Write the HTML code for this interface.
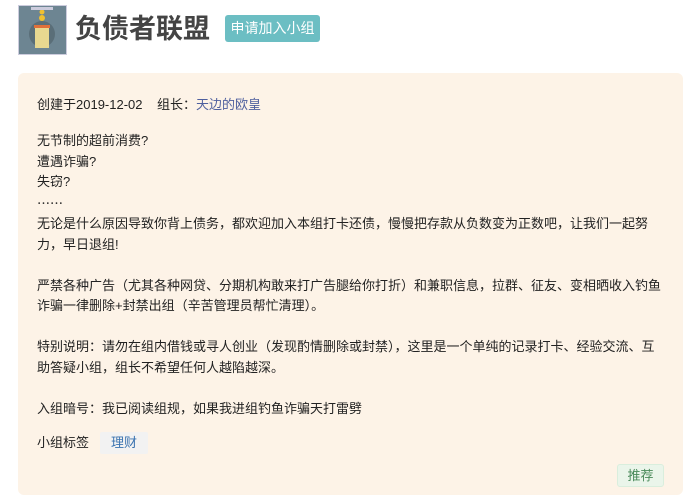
<!DOCTYPE html>
<html><head><meta charset="utf-8"><style>
body{margin:0;width:700px;height:504px;background:#fff;font-family:"Liberation Sans","Noto Sans CJK SC",sans-serif;position:relative;overflow:hidden}
.av{position:absolute;left:18px;top:5px;width:47px;height:48px;background:#6d8592;border:1px solid #ccd}
h1{position:absolute;left:75px;top:11px;margin:0;font-size:27px;line-height:36px;font-weight:bold;color:#444}
.btn{position:absolute;left:225px;top:15px;width:95px;height:27px;background:#6cbec3;border-radius:3px;color:#fff;font-size:14px;line-height:27px;text-align:center}
.card{position:absolute;left:18px;top:73px;width:665px;height:422px;background:#fdf3e7;border-radius:6px}
.t{position:absolute;left:37px;font-size:13px;color:#222;line-height:20.55px;white-space:nowrap}
a{color:#4e5f9e;text-decoration:none}
.cj{font-family:"Noto Sans CJK SC",sans-serif}
.tag{position:absolute;left:100px;top:432px;width:48px;height:22px;background:#f2f2f2;color:#3a73b0;font-size:13px;line-height:22px;text-align:center;border-radius:2px}
.rec{position:absolute;left:617px;top:464px;width:45px;height:21px;background:#eaf5ea;border:1px solid #d9eedd;color:#4a8a5a;font-size:13px;line-height:21px;text-align:center;border-radius:3px}
</style></head><body>
<div class="av"><svg width="47" height="48"><circle cx="23" cy="28" r="13" fill="#5a6e78"/><rect x="16" y="22" width="14" height="20" fill="#e8d890"/><rect x="15" y="19" width="16" height="3" fill="#e0703a"/><circle cx="23" cy="12" r="3" fill="#f0c030"/><circle cx="23" cy="6" r="2.5" fill="#f0c030"/><rect x="12" y="1" width="22" height="3" fill="#ccd"/></svg></div>
<h1>负债者联盟</h1>
<div class="btn">申请加入小组</div>
<div class="card"></div>
<div class="t" style="top:95px">创建于2019-12-02 &nbsp;&nbsp;&nbsp;组长：<a>天边的欧皇</a></div>
<div class="t" style="top:131px">无节制的超前消费?<br>遭遇诈骗?<br>失窃?<br><span class="cj">……</span><br>无论是什么原因导致你背上债务，都欢迎加入本组打卡还债，慢慢把存款从负数变为正数吧，让我们一起努<br>力，早日退组!<br><br>严禁各种广告（尤其各种网贷、分期机构敢来打广告腿给你打折）和兼职信息，拉群、征友、变相晒收入钓鱼<br>诈骗一律删除+封禁出组（辛苦管理员帮忙清理）。<br><br>特别说明：请勿在组内借钱或寻人创业（发现酌情删除或封禁），这里是一个单纯的记录打卡、经验交流、互<br>助答疑小组，组长不希望任何人越陷越深。<br><br>入组暗号：我已阅读组规，如果我进组钓鱼诈骗天打雷劈</div>
<div class="t" style="top:433px">小组标签</div>
<div class="tag">理财</div>
<div class="rec">推荐</div>
</body></html>
